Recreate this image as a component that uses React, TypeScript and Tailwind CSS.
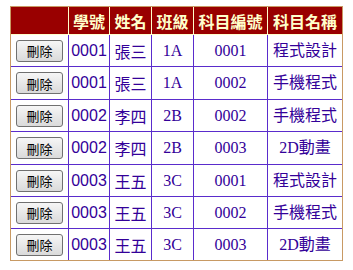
import React from 'react';

interface Row {
  id: string;
  name: string;
  cls: string;
  code: string;
  course: string;
}

const rows: Row[] = [
  { id: '0001', name: '張三', cls: '1A', code: '0001', course: '程式設計' },
  { id: '0001', name: '張三', cls: '1A', code: '0002', course: '手機程式' },
  { id: '0002', name: '李四', cls: '2B', code: '0002', course: '手機程式' },
  { id: '0002', name: '李四', cls: '2B', code: '0003', course: '2D動畫' },
  { id: '0003', name: '王五', cls: '3C', code: '0001', course: '程式設計' },
  { id: '0003', name: '王五', cls: '3C', code: '0002', course: '手機程式' },
  { id: '0003', name: '王五', cls: '3C', code: '0003', course: '2D動畫' },
];

// row heights in px, bottom border included
const heights = ['h-[32px]', 'h-[33px]', 'h-[32px]', 'h-[33px]', 'h-[32px]', 'h-[32px]', 'h-[31px]'];

const cjk = "font-['Noto_Sans_CJK_TC',sans-serif]";
const serif = "font-['Liberation_Serif','Noto_Sans_CJK_TC',serif]";
const sans = "font-['Liberation_Sans','Noto_Sans_CJK_TC',sans-serif]";

const headCell = 'flex items-center justify-center border-r border-[#ffffcc] text-[16px] font-bold text-[#ffffcc] leading-none ' + cjk;
const bodyCell = 'flex items-center justify-center border-r border-[#5a2ccc] text-[16px] text-[#330099] leading-none';

const App: React.FC = () => {
  return (
    <div className="min-h-[270px] w-[353px] bg-white pl-[10px] pt-[6px]">
      <div className="w-[333px] border border-[#c89a64]">
        {/* header */}
        <div className="grid h-[28px] grid-cols-[58px_41px_42px_42px_74px_74px] border-b border-[#ffffcc] bg-[#990000]">
          <div className={headCell}></div>
          <div className={headCell}>學號</div>
          <div className={headCell}>姓名</div>
          <div className={headCell}>班級</div>
          <div className={headCell}>科目編號</div>
          <div className={headCell + ' border-r-0'}>科目名稱</div>
        </div>

        {/* body */}
        {rows.map((row, index) => (
          <div
            key={index}
            className={
              'grid grid-cols-[58px_41px_42px_42px_74px_74px] ' +
              heights[index] +
              (index < rows.length - 1 ? ' border-b border-[#5a2ccc]' : '')
            }
          >
            <div className={bodyCell}>
              <button className={'h-[22px] w-[47px] rounded-[3px] border border-[#707070] bg-gradient-to-b from-[#f6f6f6] to-[#dadada] text-[13px] leading-none text-black ' + cjk}>
                刪除
              </button>
            </div>
            <div className={bodyCell + ' text-[14.5px] ' + sans}>{row.id}</div>
            <div className={bodyCell + ' ' + cjk}>{row.name}</div>
            <div className={bodyCell + ' ' + serif}>{row.cls}</div>
            <div className={bodyCell + ' ' + serif}>{row.code}</div>
            <div className={bodyCell + ' border-r-0 ' + serif}>{row.course}</div>
          </div>
        ))}
      </div>
    </div>
  );
};

export default App;
